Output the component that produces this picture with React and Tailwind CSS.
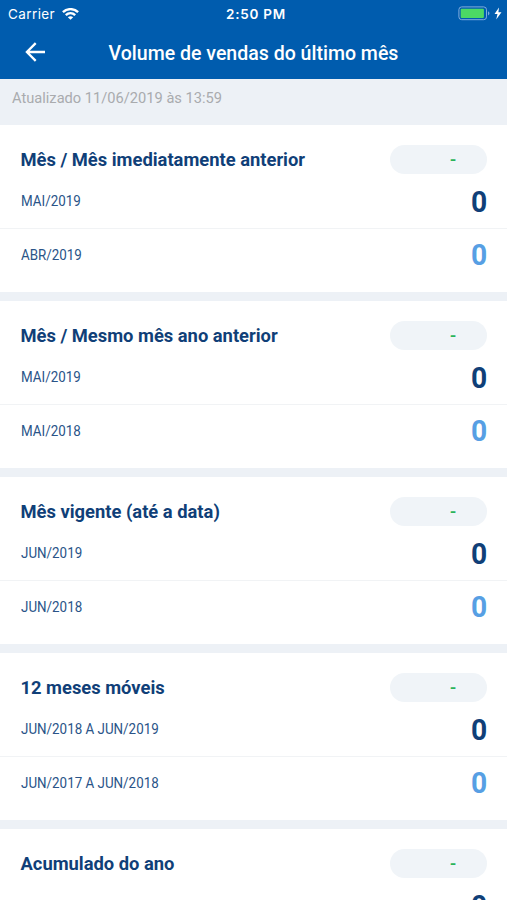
import React from 'react';

const comparativos = [
  { titulo: 'Mês / Mês imediatamente anterior', atual: 'MAI/2019', anterior: 'ABR/2019' },
  { titulo: 'Mês / Mesmo mês ano anterior', atual: 'MAI/2019', anterior: 'MAI/2018' },
  { titulo: 'Mês vigente (até a data)', atual: 'JUN/2019', anterior: 'JUN/2018' },
  { titulo: '12 meses móveis', atual: 'JUN/2018 A JUN/2019', anterior: 'JUN/2017 A JUN/2018' },
  { titulo: 'Acumulado do ano' },
];

function StatusBar() {
  return (
    <div className="grid h-[27px] grid-cols-3 items-center pl-2 pr-[5px] font-['Inter',sans-serif] text-[13.5px] leading-none">
      <div className="flex items-center gap-[7px]">
        <span className="pt-0.5 tracking-[0.4px]">Carrier</span>
        <svg width="17" height="12" viewBox="0 0 17 12" fill="none" stroke="currentColor" strokeWidth="2.4">
          <path d="M0.9 4.2C5.2 0.1 11.8 0.1 16.1 4.2" />
          <path d="M3.8 7.2C6.6 4.6 10.4 4.6 13.2 7.2" />
          <path d="M8.5 11.8L5.8 9.2C7.4 7.8 9.6 7.8 11.2 9.2Z" fill="currentColor" stroke="none" />
        </svg>
      </div>
      <span className="pl-0.5 pt-0.5 text-center font-semibold tracking-[0.75px]">2:50 PM</span>
      <div className="flex items-center justify-end gap-[3px]">
        <svg width="33" height="15" viewBox="0 0 33 15" fill="none">
          <rect x="0.9" y="0.9" width="27.6" height="12.8" rx="2.8" stroke="#7fabdd" strokeWidth="1" />
          <rect x="2.7" y="2.7" width="23.2" height="9.2" rx="1" fill="#4cd964" />
          <path d="M30 5.2C32 6 32 8.6 30 9.4Z" fill="#7fabdd" />
        </svg>
        <svg width="8" height="13" viewBox="0 0 8 13" fill="currentColor">
          <path d="M5 0.5L0.5 7H3.5L2.2 12.5L7.5 5.3H4.4Z" />
        </svg>
      </div>
    </div>
  );
}

function Header() {
  return (
    <header className="h-[79px] shrink-0 bg-[#005cae] text-white">
      <StatusBar />
      <div className="grid h-[50px] grid-cols-[72px_1fr_72px] items-center">
        <svg className="ml-[25px]" width="21" height="20" viewBox="0 0 21 20" fill="none" stroke="currentColor" strokeWidth="2.3">
          <path d="M20 10H2.5M10.7 1.1L1.9 10L10.7 18.9" />
        </svg>
        <h1 className="whitespace-nowrap pt-[3px] text-center text-[19.55px] font-medium">Volume de vendas do último mês</h1>
      </div>
    </header>
  );
}

function Comparativo({ titulo, atual, anterior }) {
  return (
    <section className="h-[167px] shrink-0 bg-white text-[#103f78]">
      <div className="flex h-[49px] items-end justify-between pl-[20.5px] pr-5">
        <h2 className="text-[18.35px] font-bold leading-[29px]">{titulo}</h2>
        {/* Variação percentual */}
        <span className="h-[29px] w-[97px] rounded-full bg-[#f0f4f8] pr-[31px] text-right text-[18px] font-medium leading-[30px] text-[#2bb35a]">
          -
        </span>
      </div>
      <div className="flex h-[55px] items-center justify-between border-b border-[#f1f3f5] pl-[20.5px] pr-5">
        <span className="origin-left scale-x-[0.955] pt-px text-[14px] text-[#2a5488]">{atual}</span>
        <span className="origin-right scale-x-[0.94] pt-px text-[30px] font-bold leading-none">0</span>
      </div>
      <div className="flex h-[53px] items-center justify-between pl-[20.5px] pr-5">
        <span className="origin-left scale-x-[0.955] text-[14px] text-[#2a5488]">{anterior}</span>
        <span className="origin-right scale-x-[0.94] pb-0.5 text-[30px] font-bold leading-none text-[#579fe4]">0</span>
      </div>
    </section>
  );
}

export default function App() {
  return (
    <div className="flex h-[900px] w-[507px] flex-col overflow-hidden bg-[#edf1f6] font-['Roboto',sans-serif]">
      <Header />
      <p className="h-[46px] shrink-0 pl-3 pt-[9px] text-[14.65px] leading-5 text-[#a9abae]">
        Atualizado 11/06/2019 às 13:59
      </p>
      <main className="flex flex-col gap-[9px]">
        {comparativos.map((item) => (
          <Comparativo key={item.titulo} {...item} />
        ))}
      </main>
    </div>
  );
}
